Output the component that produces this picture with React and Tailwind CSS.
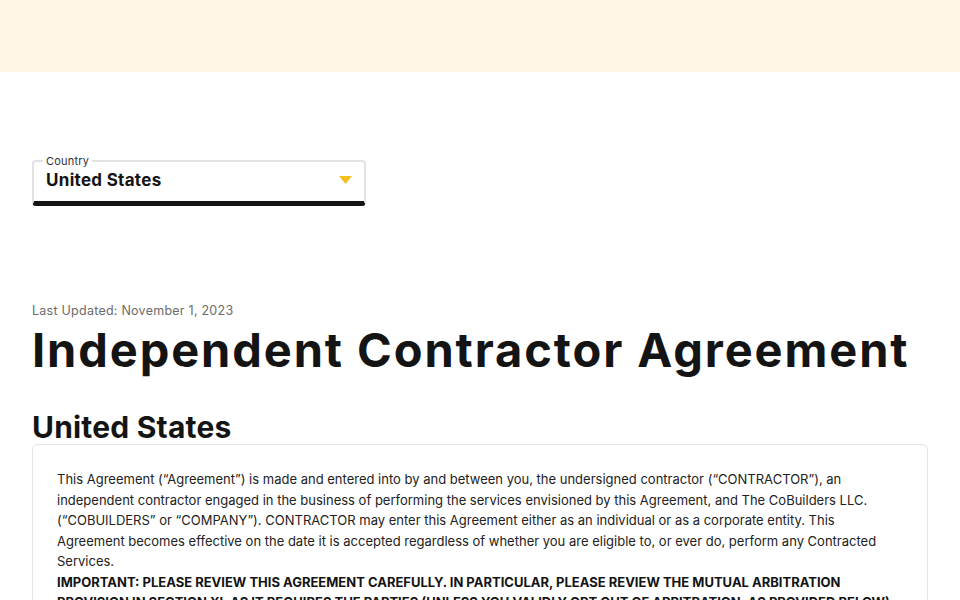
const lines = [
  "This Agreement (“Agreement”) is made and entered into by and between you, the undersigned contractor (“CONTRACTOR”), an",
  "independent contractor engaged in the business of performing the services envisioned by this Agreement, and The CoBuilders LLC.",
  "(“COBUILDERS” or “COMPANY”). CONTRACTOR may enter this Agreement either as an individual or as a corporate entity. This",
  "Agreement becomes effective on the date it is accepted regardless of whether you are eligible to, or ever do, perform any Contracted",
  "Services.",
];

const boldLines = [
  "IMPORTANT: PLEASE REVIEW THIS AGREEMENT CAREFULLY. IN PARTICULAR, PLEASE REVIEW THE MUTUAL ARBITRATION",
  "PROVISION IN SECTION XI, AS IT REQUIRES THE PARTIES (UNLESS YOU VALIDLY OPT OUT OF ARBITRATION, AS PROVIDED BELOW)",
  "TO RESOLVE DISPUTES ON AN INDIVIDUAL BASIS, TO THE FULLEST EXTENT PERMITTED BY LAW, THROUGH FINAL AND BINDING",
];

const App = () => {
  return (
    <div className="min-h-screen w-full bg-white text-[#141414] font-['Inter',sans-serif]">
      <div className="h-[72px] w-full bg-[#fff7e5]"></div>

      <div className="px-8">
        <div className="pt-[88px]">
          <div className="relative w-[334px]">
            <div className="absolute -top-[5px] left-[11px] bg-white px-[3px] text-[11px] leading-[12px] tracking-[0.2px] text-[#333]">
              Country
            </div>
            <div className="flex h-[46px] items-center justify-between rounded-[4px] border-2 border-[#e2e2e2] border-b-[5px] border-b-[#141414] pl-3 pr-[12px]">
              <span className="-mt-[1px] text-[17px] font-bold tracking-[0.3px] text-[#141414]">United States</span>
              <svg width="13" height="8" viewBox="0 0 13 8" className="-mt-[3px]">
                <path d="M0 0 H13 L6.5 8 Z" fill="#f2c01e" />
              </svg>
            </div>
          </div>
        </div>

        <div className="pt-[97px]">
          <div className="text-[12.5px] leading-[16px] tracking-[0.25px] text-[#6b6b6b]">Last Updated: November 1, 2023</div>
          <h1 className="mt-[3px] text-[47px] leading-[56px] font-bold tracking-[1.9px] text-[#141414]">
            Independent Contractor Agreement
          </h1>
          <h2 className="mt-[32px] text-[30px] leading-[34px] font-bold tracking-[0.2px] text-[#141414]">United States</h2>

          <div className="w-[896px] rounded-t-[6px] border border-b-0 border-[#e4e4e4] px-6 pt-[24px] pb-6">
            <p className="text-[13px] leading-[20.5px] text-[#222]">
              {lines.map((l, i) => (
                <span key={i} className="block whitespace-nowrap">{l}</span>
              ))}
            </p>
            <p className="text-[13px] leading-[20.5px] font-bold text-[#141414]">
              {boldLines.map((l, i) => (
                <span key={i} className="block whitespace-nowrap">{l}</span>
              ))}
            </p>
          </div>
        </div>
      </div>
    </div>
  );
};

export default App;
